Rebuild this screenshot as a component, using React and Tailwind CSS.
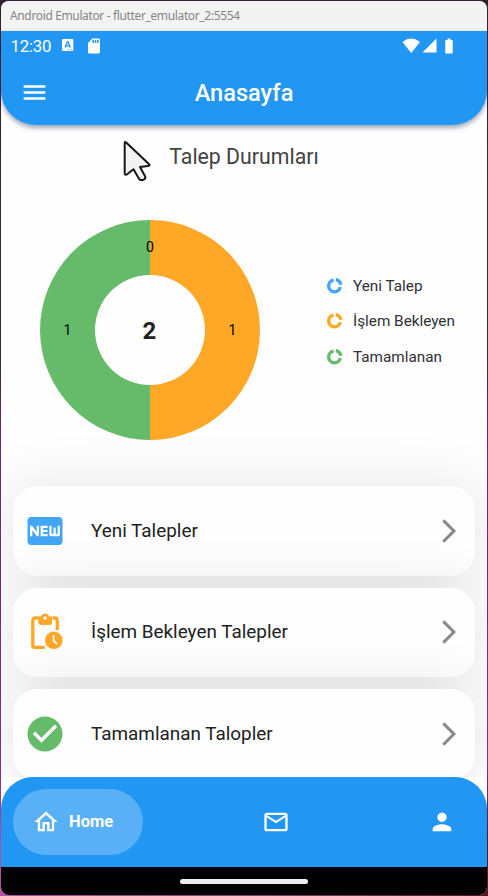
import {
  MdMenu,
  MdSdCard,
  MdFiberNew,
  MdCheckCircle,
  MdArrowForwardIos,
  MdOutlineHome,
  MdMailOutline,
  MdPerson,
  MdBatteryFull,
} from "react-icons/md";

function StatusBar() {
  return (
    <div className="flex h-[29px] items-center pl-[9.5px] pr-[29px] text-[16.8px] leading-none">
      <span className="w-[42px] pt-px tracking-[-0.2px]">12:30</span>
      <svg className="ml-[9px]" width="12" height="13" viewBox="0 0 12 13">
        <rect x="0" y="0" width="11.3" height="12" rx="1" fill="#fff" />
        <path d="M3.1 8.6 5.2 3h1L8.3 8.6M4 6.8h3.4" fill="none" stroke="#2196f3" strokeWidth="1.3" />
        <path d="M6 10.4h4" stroke="#2196f3" strokeWidth="0.8" strokeDasharray="1 .6" />
      </svg>
      <MdSdCard className="ml-[11px] h-[18px] w-[18px]" />
      <div className="ml-auto flex items-center">
        <svg width="19" height="16" viewBox="0 0 19 16">
          <path d="M0.5 3.9Q9.2-2.8 18 3.9L9.2 15Z" fill="#fff" />
        </svg>
        <svg className="ml-px" width="15" height="15" viewBox="0 0 15 15">
          <path d="M14.5 0.5V14.5H0.5Z" fill="#fff" />
        </svg>
        <MdBatteryFull className="ml-[3px] h-[18px] w-[18px]" />
      </div>
    </div>
  );
}

function Header() {
  return (
    <header className="relative z-10 h-[94px] shrink-0 rounded-b-[35px] bg-[#2196f3] text-white shadow-[0_3px_5px_rgba(0,25,70,0.38)]">
      <StatusBar />
      <div className="grid h-[65px] grid-cols-[1fr_auto_1fr] items-center px-[18.5px]">
        <MdMenu className="h-[29px] w-[29px]" />
        <h1 className="pt-[3px] text-[23.6px] leading-none font-medium">Anasayfa</h1>
      </div>
    </header>
  );
}

function Donut() {
  return (
    <svg className="h-[220px] w-[220px]" viewBox="0 0 220 220" fontFamily="Roboto, sans-serif" textAnchor="middle">
      <path d="M110 0a110 110 0 0 1 0 220v-55a55 55 0 0 0 0-110Z" fill="#ffa726" />
      <path d="M110 0a110 110 0 0 0 0 220v-55a55 55 0 0 1 0-110Z" fill="#66bb6a" />
      <g fontSize="14" fill="#000">
        <text x="110" y="32.4">0</text>
        <text x="27.5" y="115">1</text>
        <text x="192.5" y="115">1</text>
      </g>
      <text x="109.5" y="119" fontSize="24" fontWeight="700" fill="#212121">2</text>
    </svg>
  );
}

function LegendIcon({ color }) {
  return (
    <svg className={`mr-[9px] mb-px h-[18px] w-[18px] ${color}`} viewBox="0 0 18 18" fill="none" stroke="currentColor" strokeWidth="3.4">
      <path d="M7.7 3.1A5.9 5.9 0 1 0 14.3 10.2" />
      <path d="M9.8 2.6A6.2 6.2 0 0 1 14.8 7.7" />
    </svg>
  );
}

function PendingIcon({ className }) {
  return (
    <svg className={className} viewBox="0 0 42 42">
      <path
        d="M14.5 7H11Q8.8 7 8.8 9.2V34.2Q8.8 36.4 11 36.4H20.8M28.5 7H31.1Q33.3 7 33.3 9.2V19"
        fill="none"
        stroke="currentColor"
        strokeWidth="3.3"
      />
      <path
        fillRule="evenodd"
        d="M14.3 5.4H16.6A5 5 0 0 1 25.6 5.4H28V11.2Q28 13.9 25.4 13.9H16.9Q14.3 13.9 14.3 11.2ZM21.1 5.2a1.8 1.8 0 1 0 0 3.6a1.8 1.8 0 0 0 0-3.6Z"
        fill="currentColor"
      />
      <circle cx="29.8" cy="29.3" r="8.8" fill="currentColor" />
      <path d="M29.6 24V29.7L33.1 33.2" fill="none" stroke="#fefefe" strokeWidth="1.7" />
    </svg>
  );
}

const legend = [
  ["Yeni Talep", "text-[#42a5f5]"],
  ["İşlem Bekleyen", "text-[#ffa726]"],
  ["Tamamlanan", "text-[#66bb6a]"],
];

const cards = [
  ["Yeni Talepler", MdFiberNew, "text-[#42a5f5]"],
  ["İşlem Bekleyen Talepler", PendingIcon, "text-[#ffa726]"],
  ["Tamamlanan Talopler", MdCheckCircle, "text-[#66bb6a]"],
];

function Cursor() {
  return (
    <svg className="absolute top-[15px] left-[120.5px]" width="32" height="44" viewBox="0 0 32 44">
      <path
        d="M2.7 3.4Q2.7 1 4.4 2.7L26.9 24Q28.6 25.9 26 26.1L18 27L23.2 36.5Q23.9 38.3 22.1 39.3Q18.4 41.2 17 38.7L11.5 29.3L5.1 34.3Q2.7 35.5 2.7 33Z"
        fill="#f3f3f3"
        stroke="#161616"
        strokeWidth="2"
        strokeLinejoin="round"
      />
    </svg>
  );
}

export default function App() {
  return (
    <div className="h-[896px] w-[488px] bg-[linear-gradient(to_right,#b050a0,#854070_50%,#5a1520)] font-[Roboto,sans-serif]">
      <div className="flex h-[896px] w-[488px] flex-col bg-[linear-gradient(to_bottom,#302030,#402839_40%,#70287c_50%,#802c86_86%,transparent_94%)] p-px">
        <div className="flex h-[894px] w-[486px] flex-col overflow-hidden rounded-[8px] bg-[#fefefe]">
          <div className="flex h-[30px] shrink-0 items-center bg-[#f3f3f3] pl-[9px] font-['Noto_Sans',sans-serif] text-[12px] text-[#858585]">
            <span className="tracking-[-0.36px]">Android Emulator - flutter_emulator_2:5554</span>
          </div>
          <Header />
          <main className="relative flex h-[652px] shrink-0 flex-col overflow-hidden">
            <h2 className="pt-[19px] text-center text-[21.3px] leading-[25px] text-[#424242]">Talep Durumları</h2>
            <Cursor />
            <section className="mt-[51px] flex h-[220px] shrink-0 items-center pl-[39px]">
              <Donut />
              <ul className="mb-[17px] ml-[66px] flex flex-col gap-[11.5px]">
                {legend.map(([label, color]) => (
                  <li key={label} className="flex h-[24px] items-center text-[15.3px] text-[#303036]">
                    <LegendIcon color={color} />
                    {label}
                  </li>
                ))}
              </ul>
            </section>
            <section className="mt-[46px] flex flex-col gap-3 px-3">
              {cards.map(([label, Icon, color]) => (
                <div
                  key={label}
                  className="relative flex h-[89.6px] shrink-0 items-center rounded-[24px] bg-[#fefefe] pr-[12px] pl-[11px] shadow-[0_2px_60px_rgba(0,0,0,0.11)]"
                >
                  <Icon className={`h-[42px] w-[42px] ${color}`} />
                  <span className="ml-[25px] grow text-[18.9px] text-[#212121]">{label}</span>
                  <MdArrowForwardIos className="h-[28px] w-[28px] text-[#888888]" />
                </div>
              ))}
            </section>
          </main>
          <nav className="flex h-[90px] shrink-0 items-center rounded-t-[32px] bg-[#2196f3] pr-[31px] pl-[12px] text-white">
            <div className="flex h-[66px] w-[130px] items-center rounded-[33px] bg-[#59b0f6] pl-[19px]">
              <MdOutlineHome className="h-[28px] w-[28px]" />
              <span className="ml-[9px] text-[16.5px] font-bold">Home</span>
            </div>
            <MdMailOutline className="ml-[119px] h-[28px] w-[28px]" />
            <MdPerson className="ml-auto h-[28px] w-[28px]" />
          </nav>
          <div className="flex h-[28px] shrink-0 items-center justify-center bg-black">
            <div className="h-[5px] w-[128px] rounded-full bg-[#eeeeea]" />
          </div>
        </div>
      </div>
    </div>
  );
}
